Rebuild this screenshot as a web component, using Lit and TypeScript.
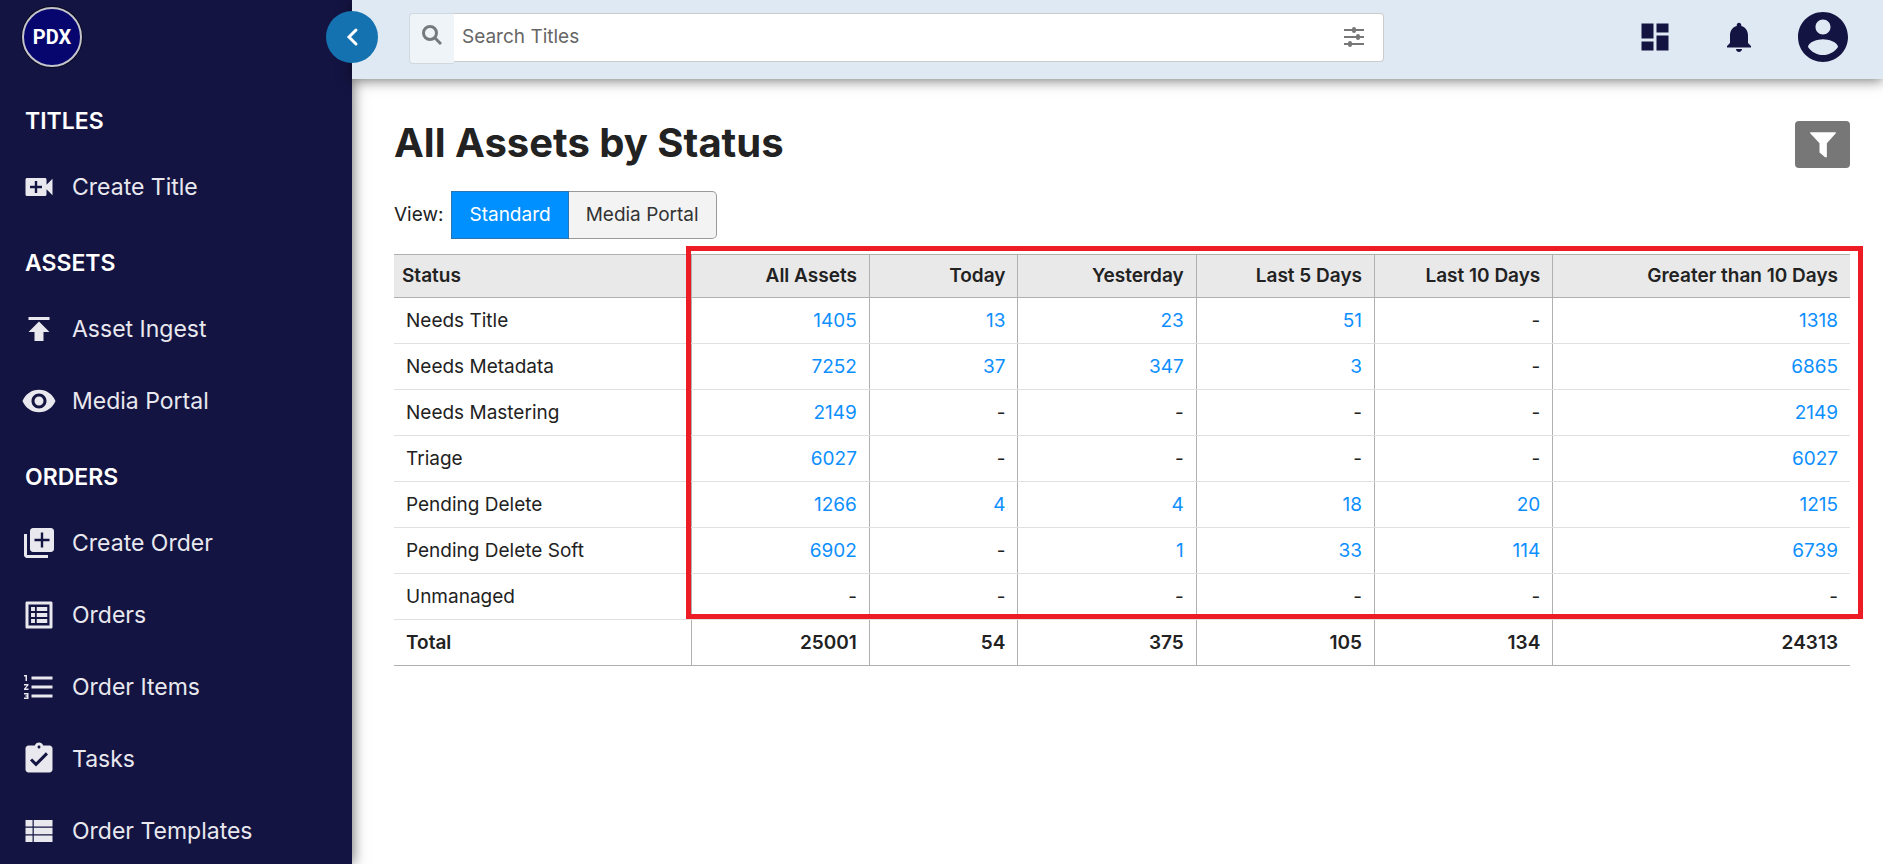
import { LitElement, html, svg, css } from "lit";
import { customElement, state } from "lit/decorators.js";
import { classMap } from "lit/directives/class-map.js";

const ICONS: Record<string, string> = {
  videoCall:
    "M17 10.5V7c0-.55-.45-1-1-1H4c-.55 0-1 .45-1 1v10c0 .55.45 1 1 1h12c.55 0 1-.45 1-1v-3.5l4 4v-11l-4 4zM14 12.800h-3.200v3.200H9.200v-3.200H6v-1.600h3.200V8h1.600v3.200H14z",
  publish: "M5 4v2h14V4H5zm0 10h4v6h6v-6h4l-7-7-7 7z",
  eye: "M12 4.5C7 4.5 2.73 7.61 1 12c1.73 4.39 6 7.5 11 7.5s9.27-3.11 11-7.5c-1.73-4.39-6-7.5-11-7.5zM12 17c-2.76 0-5-2.24-5-5s2.24-5 5-5 5 2.24 5 5-2.24 5-5 5zm0-8c-1.66 0-3 1.34-3 3s1.34 3 3 3 3-1.34 3-3-1.34-3-3-3z",
  libraryAdd:
    "M4 6H2v14c0 1.1.9 2 2 2h14v-2H4V6zm16-4H8c-1.1 0-2 .9-2 2v12c0 1.1.9 2 2 2h12c1.1 0 2-.9 2-2V4c0-1.1-.9-2-2-2zM19 10.800h-4.200V15h-1.600v-4.200H9V9.200h4.200V5h1.600v4.200H19z",
  listAlt:
    "M19 5v14H5V5h14m1.1-2H3.9c-.5 0-.9.4-.9.9v16.2c0 .4.4.9.9.9h16.2c.4 0 .9-.5.9-.9V3.9c0-.5-.5-.9-.9-.9zM10.500 6.700h7v2.600h-7zM10.500 10.700h7v2.600h-7zM10.500 14.700h7v2.600h-7zM6.700 6.700h2.600v2.600H6.700zM6.700 10.700h2.600v2.600H6.700zM6.700 14.700h2.600v2.600H6.700z",
  numbered:
    "M2 17h2v.5H3v1h1v.5H2v1h3v-4H2v1zm1-9h1V4H2v1h1v3zm-1 3h1.8L2 13.1v.9h3v-1H3.2L5 10.9V10H2v1zm5-6v2h14V5H7zm0 14h14v-2H7v2zm0-6h14v-2H7v2z",
  task: "M19 3h-4.18C14.4 1.84 13.3 1 12 1c-1.3 0-2.4.84-2.82 2H5c-1.1 0-2 .9-2 2v14c0 1.1.9 2 2 2h14c1.1 0 2-.9 2-2V5c0-1.1-.9-2-2-2zm-7 0c.55 0 1 .45 1 1s-.45 1-1 1-1-.45-1-1 .45-1 1-1zm-2 14l-4-4 1.41-1.41L10 14.17l6.59-6.59L18 9l-8 8z",
  viewList:
    "M3 4.7h4.7V9H3zM8.5 4.7H21V9H8.5zM3 9.9h4.7v4.2H3zM8.5 9.9H21v4.2H8.5zM3 15h4.7v4.3H3zM8.5 15H21v4.3H8.5z",
  dashboard: "M3 13h8V3H3v10zm0 8h8v-6H3v6zm10 0h8V11h-8v10zm0-18v6h8V3h-8z",
  bell: "M12 22c1.1 0 2-.9 2-2h-4c0 1.1.89 2 2 2zm6-6v-5c0-3.07-1.64-5.64-4.5-6.32V4c0-.83-.67-1.5-1.5-1.5s-1.5.67-1.5 1.5v.68C7.63 5.36 6 7.92 6 11v5l-2 2v1h16v-1l-2-2z",
  account:
    "M12 2C6.48 2 2 6.48 2 12s4.48 10 10 10 10-4.48 10-10S17.52 2 12 2zm0 3c1.66 0 3 1.34 3 3s-1.34 3-3 3-3-1.34-3-3 1.34-3 3-3zm0 14.2c-2.5 0-4.71-1.28-6-3.22.03-1.99 4-3.08 6-3.08 1.99 0 5.97 1.09 6 3.08-1.29 1.94-3.5 3.22-6 3.22z",
  tune: "M2 4h8q0-2 2-2t2 2h8v2h-8q0 2-2 2t-2-2H2zM2 11h12q0-2 2-2t2 2h4v2h-4q0 2-2 2t-2-2H2zM2 18h4q0-2 2-2t2 2h12v2H10q0 2-2 2t-2-2H2z",
  funnel: "M1 1h22v1L15.300 10.500v12.100h-1.500L9 18.500v-8L1 2z",
};

const icon = (name: string) => html`<svg class="icon" viewBox="0 0 24 24" aria-hidden="true">
  ${svg`<path d=${ICONS[name]}></path>`}
</svg>`;

const NAV = [
  { title: "TITLES", items: [["Create Title", "videoCall"]] },
  { title: "ASSETS", items: [["Asset Ingest", "publish"], ["Media Portal", "eye"]] },
  {
    title: "ORDERS",
    items: [
      ["Create Order", "libraryAdd"],
      ["Orders", "listAlt"],
      ["Order Items", "numbered"],
      ["Tasks", "task"],
      ["Order Templates", "viewList"],
    ],
  },
];

const COLUMNS = ["All Assets", "Today", "Yesterday", "Last 5 Days", "Last 10 Days", "Greater than 10 Days"];

const ROWS: [string, string[]][] = [
  ["Needs Title", ["1405", "13", "23", "51", "-", "1318"]],
  ["Needs Metadata", ["7252", "37", "347", "3", "-", "6865"]],
  ["Needs Mastering", ["2149", "-", "-", "-", "-", "2149"]],
  ["Triage", ["6027", "-", "-", "-", "-", "6027"]],
  ["Pending Delete", ["1266", "4", "4", "18", "20", "1215"]],
  ["Pending Delete Soft", ["6902", "-", "1", "33", "114", "6739"]],
  ["Unmanaged", ["-", "-", "-", "-", "-", "-"]],
];

const TOTALS = ["25001", "54", "375", "105", "134", "24313"];

@customElement("side-nav")
export class SideNav extends LitElement {
  static styles = css`
    :host {
      display: block;
      box-sizing: border-box;
      height: 100%;
      padding-top: 5px;
      background: #141442;
      color: #e8e8ee;
    }
    .logo {
      display: block;
      width: 64px;
      height: 64px;
      margin-left: 20px;
    }
    .mark {
      fill: #fff;
      font-family: Roboto, sans-serif;
      font-size: 20px;
      font-weight: 700;
      text-anchor: middle;
    }
    .nav {
      padding-top: 22px;
    }
    .group {
      padding-bottom: 10px;
    }
    .heading {
      margin: 0;
      padding-left: 25px;
      font-size: 23px;
      font-weight: 600;
      line-height: 60px;
      color: #fff;
    }
    .list {
      list-style: none;
      margin: 0;
      padding: 0;
    }
    .link {
      display: flex;
      align-items: center;
      gap: 15px;
      height: 72px;
      padding-left: 21px;
      font-size: 23px;
      color: inherit;
      text-decoration: none;
    }
    .icon {
      width: 36px;
      height: 36px;
      fill: currentColor;
    }
  `;

  render() {
    return html`
      <svg class="logo" viewBox="0 0 64 64" role="img" aria-label="PDX">
        <circle cx="32" cy="32" r="31" fill="#0a0a1c"></circle>
        <circle cx="32" cy="32" r="29" fill="#06066e" stroke="#c4c4cc" stroke-width="2"></circle>
        <text class="mark" x="32" y="39">PDX</text>
      </svg>
      <nav class="nav">
        ${NAV.map(
          (g) => html`<section class="group">
            <h2 class="heading">${g.title}</h2>
            <ul class="list">
              ${g.items.map(([label, name]) => html`<li><a class="link" href="#">${icon(name)}<span>${label}</span></a></li>`)}
            </ul>
          </section>`
        )}
      </nav>
    `;
  }
}

@customElement("top-bar")
export class TopBar extends LitElement {
  static styles = css`
    :host {
      display: flex;
      align-items: center;
      height: 79px;
      box-sizing: border-box;
      padding: 0 18px 5px 57px;
      background: #dfe9f3;
      box-shadow: 0 2px 12px rgba(0, 0, 0, 0.5);
    }
    .search {
      display: flex;
      flex: 1;
      align-items: flex-start;
      height: 49px;
      margin-right: 229px;
    }
    .lead {
      display: flex;
      justify-content: center;
      width: 45px;
      height: 51px;
      box-sizing: border-box;
      padding-top: 11px;
      border: 1px solid #d0d9e0;
      border-right: 0;
      border-radius: 4px 0 0 4px;
      background: #eff4f8;
    }
    .glass {
      width: 20px;
      height: 20px;
      fill: none;
      stroke: #747a7e;
    }
    .field {
      display: flex;
      flex: 1;
      height: 49px;
      box-sizing: border-box;
      border: 1px solid #ccc;
      border-left: 0;
      border-radius: 0 4px 4px 0;
      background: #fff;
    }
    .input {
      flex: 1;
      min-width: 0;
      padding: 0 8px;
      border: 0;
      outline: 0;
      background: none;
      font: inherit;
      color: #333;
    }
    .input::placeholder {
      color: #666;
      opacity: 1;
    }
    .button {
      display: flex;
      align-items: center;
      justify-content: center;
      padding: 0;
      border: 0;
      background: none;
      color: #141442;
    }
    .tune {
      width: 58px;
      color: #777;
    }
    .action {
      width: 84px;
    }
    .icon {
      width: 36px;
      height: 36px;
      fill: currentColor;
    }
    .tune .icon {
      width: 24px;
      height: 24px;
    }
    .account .icon {
      width: 60px;
      height: 60px;
    }
  `;

  render() {
    return html`
      <div class="search">
        <label class="lead" for="search">
          <svg class="glass" viewBox="0 0 20 20" aria-hidden="true">
            <circle cx="8" cy="8" r="6.500" stroke-width="3"></circle>
            <path d="M13 13l6 6" stroke-width="3"></path>
          </svg>
        </label>
        <div class="field">
          <input class="input" id="search" type="search" placeholder="Search Titles" aria-label="Search Titles" />
          <button class="button tune" aria-label="Search options">${icon("tune")}</button>
        </div>
      </div>
      <button class="button action" aria-label="Dashboard">${icon("dashboard")}</button>
      <button class="button action" aria-label="Notifications">${icon("bell")}</button>
      <button class="button action account" aria-label="Account">${icon("account")}</button>
    `;
  }
}

@customElement("status-table")
export class StatusTable extends LitElement {
  static styles = css`
    :host {
      display: block;
      position: relative;
    }
    .table {
      width: 100%;
      table-layout: fixed;
      border-collapse: collapse;
    }
    .wide {
      width: 20%;
    }
    .mid {
      width: 12%;
    }
    .narrow {
      width: 10%;
    }
    .cell {
      height: 46px;
      box-sizing: border-box;
      padding: 0 12px;
      border-bottom: 1px solid #e0e0e0;
      font-weight: 400;
      text-align: right;
      white-space: nowrap;
    }
    .cell + .cell {
      border-left: 1px solid #b0b0b0;
    }
    .name {
      text-align: left;
    }
    .head .cell {
      height: 43px;
      border-top: 1px solid #b0b0b0;
      border-bottom-color: #b0b0b0;
      background: #e9e9e9;
      font-weight: 600;
    }
    .head .name {
      padding-left: 8px;
    }
    .total .cell {
      border-top: 1px solid #b0b0b0;
      border-bottom-color: #b0b0b0;
      font-weight: 600;
    }
    .count {
      color: #0d8fff;
      text-decoration: none;
    }
    .highlight {
      position: absolute;
      top: -8px;
      right: -13px;
      bottom: 47px;
      left: calc(100% * 20 / 98 - 5px);
      border: 5px solid #ed1c24;
      pointer-events: none;
    }
  `;

  render() {
    return html`
      <table class="table">
        <colgroup>
          <col class="wide" />
          <col class="mid" />
          <col class="narrow" />
          <col class="mid" />
          <col class="mid" />
          <col class="mid" />
          <col class="wide" />
        </colgroup>
        <thead>
          <tr class="head">
            <th class="cell name" scope="col">Status</th>
            ${COLUMNS.map((c) => html`<th class="cell" scope="col">${c}</th>`)}
          </tr>
        </thead>
        <tbody>
          ${ROWS.map(
            ([name, values]) => html`<tr>
              <th class="cell name" scope="row">${name}</th>
              ${values.map((v) => html`<td class="cell">${v === "-" ? v : html`<a class="count" href="#">${v}</a>`}</td>`)}
            </tr>`
          )}
        </tbody>
        <tfoot>
          <tr class="total">
            <th class="cell name" scope="row">Total</th>
            ${TOTALS.map((v) => html`<td class="cell">${v}</td>`)}
          </tr>
        </tfoot>
      </table>
      <div class="highlight"></div>
    `;
  }
}

@customElement("app-root")
export class AppRoot extends LitElement {
  static styles = css`
    :host {
      position: relative;
      display: grid;
      grid-template-columns: 352px minmax(0, 1fr);
      height: 100vh;
      overflow: hidden;
      background: #fff;
      color: #222;
      font-family: Inter, "Open Sans", sans-serif;
      font-size: 19px;
      line-height: 24px;
    }
    .side {
      position: relative;
      z-index: 2;
      min-height: 0;
      box-shadow: 2px 0 12px rgba(0, 0, 0, 0.5);
    }
    .collapse {
      position: absolute;
      z-index: 4;
      top: 11px;
      left: 326px;
      display: flex;
      align-items: center;
      justify-content: center;
      width: 52px;
      height: 52px;
      padding: 0;
      border: 0;
      border-radius: 50%;
      background: #1572b0;
    }
    .chevron {
      width: 20px;
      height: 20px;
      fill: none;
      stroke: #fff;
      stroke-width: 3;
      stroke-linecap: round;
    }
    .page {
      display: flex;
      flex-direction: column;
      min-width: 0;
    }
    .bar {
      position: relative;
      z-index: 3;
    }
    .content {
      padding: 42px 33px 0 42px;
    }
    .title-row {
      display: flex;
      align-items: flex-start;
      justify-content: space-between;
    }
    .title {
      margin: 0;
      font-size: 40px;
      font-weight: 700;
      line-height: 44px;
    }
    .filter {
      display: flex;
      align-items: center;
      justify-content: center;
      width: 55px;
      height: 47px;
      padding: 0;
      border: 0;
      border-radius: 4px;
      background: #777;
      color: #fff;
    }
    .icon {
      width: 28px;
      height: 28px;
      fill: currentColor;
    }
    .view {
      display: flex;
      align-items: center;
      gap: 8px;
      margin: 23px 0 15px;
    }
    .tabs {
      display: flex;
    }
    .tab {
      height: 48px;
      padding: 0 17px;
      border: 1px solid #999;
      background: #f3f3f3;
      color: #333;
      font: inherit;
    }
    .tab + .tab {
      border-left: 0;
      border-radius: 0 5px 5px 0;
    }
    .tab.on {
      border-color: #2b74b0;
      background: #0090ff;
      color: #fff;
    }
  `;

  @state() private view = "Standard";

  render() {
    return html`
      <aside class="side"><side-nav></side-nav></aside>
      <div class="page">
        <top-bar class="bar"></top-bar>
        <main class="content">
          <div class="title-row">
            <h1 class="title">All Assets by Status</h1>
            <button class="filter" aria-label="Filter">${icon("funnel")}</button>
          </div>
          <div class="view">
            <span>View:</span>
            <div class="tabs" role="group" aria-label="View">
              ${["Standard", "Media Portal"].map(
                (v) => html`<button class=${classMap({ tab: true, on: this.view === v })} @click=${() => (this.view = v)}>${v}</button>`
              )}
            </div>
          </div>
          <status-table></status-table>
        </main>
      </div>
      <button class="collapse" aria-label="Collapse menu">
        <svg class="chevron" viewBox="0 0 20 20" aria-hidden="true"><path d="M14 3L7 10l7 7"></path></svg>
      </button>
    `;
  }
}
